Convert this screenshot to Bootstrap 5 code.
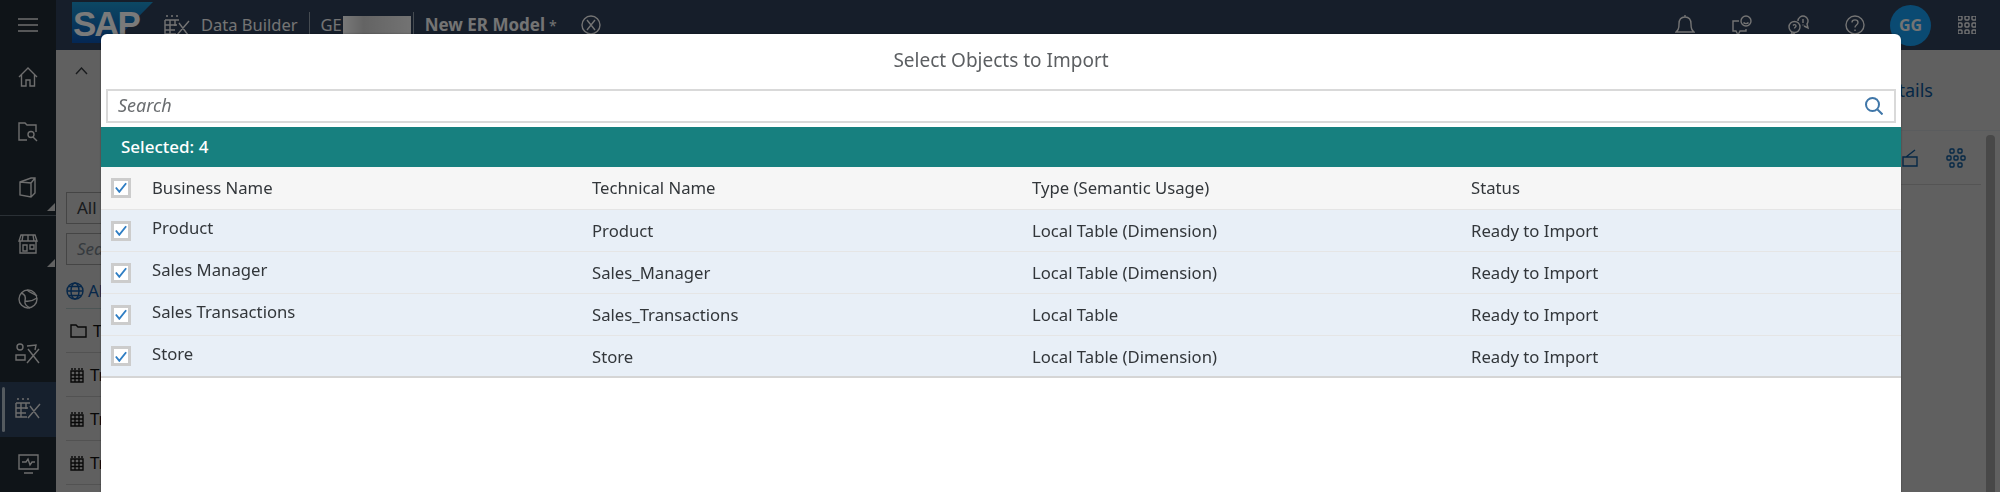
<!DOCTYPE html>
<html lang="en">
<head>
    <meta charset="UTF-8">
    <title>Data Builder - Select Objects to Import</title>
    <link rel="stylesheet" href="https://cdn.jsdelivr.net/npm/bootstrap@5.3.0/dist/css/bootstrap.min.css">
    <style>
        body { font-family: "Noto Sans", "Liberation Sans", sans-serif; height: 492px; overflow: hidden; background: #c0c0c0; color: #32363a; }
        svg { display: block; fill: none; stroke: currentColor; stroke-width: 1.4; }

        /* side rail */
        .rail { width: 56px; height: 492px; background: #1e2830; color: #dcdcdc; flex: none; }
        .rail-top { height: 50px; }
        .rail-item { height: 56px; position: relative; }
        .rail-item.has-more::after { content: ""; position: absolute; right: 1px; bottom: 4px; border: 4px solid transparent; border-right-color: #c4c4c4; border-bottom-color: #c4c4c4; }
        .rail-item.active { background: #2c405a; }
        .rail-item.active::before { content: ""; position: absolute; left: 2px; top: 5px; bottom: 5px; width: 3px; border-radius: 2px; background: #a9b4be; }
        .rail-sep { height: 1px; background: #55606a; }

        /* shell header */
        .shell { height: 50px; background: #2c3c54; color: #e8e8e8; font-size: 16.5px; padding-left: 16px; }
        .sap-logo { position: relative; width: 81px; height: 41px; margin-top: 2px; align-self: flex-start; color: #f4f4f4; font: bold 35px/43px "Liberation Sans", sans-serif; letter-spacing: -2px; padding-left: 1px; }
        .sap-logo::before { content: ""; position: absolute; inset: 0; z-index: -1; clip-path: polygon(0 0, 100% 0, 50% 100%, 0 100%); background: linear-gradient(#1a90c8, #0a4fa8); }
        .shell-icon { margin-left: 11px; margin-right: 11px; }
        .shell-sep { width: 1px; height: 27px; background: #8a96a2; margin: 0 11px; }
        .blurred { width: 68px; height: 19px; margin: 0 2px 0 1px; background: linear-gradient(90deg, #f2f2f2, #c8c8c8 30%, #e6e6e6); }
        .model-name { font-size: 17px; font-weight: 700; }
        .model-dirty { margin-left: 4px; font-size: 14px; }
        .actions { gap: 36px; padding-right: 24px; }
        .avatar { width: 41px; height: 41px; border-radius: 50%; background: #1494e4; font-size: 16px; font-weight: 700; margin: 0 -9px 0 -11px; }

        /* page under the dialog */
        .pane-left { width: 200px; padding: 17px 0 0 10px; font-size: 17px; }
        .pane-right { width: 200px; font-size: 17px; }
        .up-chevron { margin-left: 9px; height: 125px; }
        .filter-box { height: 32px; border: 1px solid #8a8a8a; width: 190px; padding-left: 10px; margin-bottom: 9px; line-height: 30px; }
        .filter-box.search-like { margin-bottom: 0; }
        .tree-head { height: 44px; color: #0f4f92; border-bottom: 1px solid #9aa; padding-top: 17px; gap: 4px; line-height: 18px; }
        .tree-row { height: 44px; border-bottom: 1px solid #a5a5a5; padding-left: 4px; gap: 6px; color: #111; }
        .details-link { height: 81px; line-height: 80px; border-bottom: 1px solid #b4b8bc; text-align: right; padding-right: 67px; color: #0a4f8c; font-size: 18px; }
        .tool-row { height: 54px; border-bottom: 1px solid #a8a8a8; width: 80px; margin-left: 101px; color: #0a4f8c; justify-content: space-between; padding: 0 15px 0 1px; }
        .scroll-thumb { position: absolute; left: 186px; top: 85px; width: 9px; height: 360px; border-radius: 4px; background: #909090; }

        /* dialog */
        .import-dialog { position: absolute; left: 101px; top: 34px; width: 1800px; height: 470px; z-index: 1055; border-radius: 6px 6px 0 0; background: #fff; border: 0; box-shadow: 0 0 2px rgba(0,0,0,.4); }
        .dialog-title { height: 55px; line-height: 52px; text-align: center; font-size: 19px; color: #5c5f62; }
        .search-box { height: 34px; margin: 0 5px 4px; border: 2px solid #d9d9d9; }
        .search-box input { border: 0; border-radius: 0; height: 30px; padding: 0 0 2px 10px; font-size: 18px; font-style: italic; box-shadow: none; background: transparent; }
        .search-box input::placeholder { color: #6a6d70; }
        .search-box svg { margin-right: 11px; color: #3f76a8; stroke-width: 2; flex: none; }
        .selected-bar { height: 40px; background: #17807f; color: #fff; font-size: 17px; font-weight: 500; line-height: 39px; padding-left: 20px; }
        .import-table { table-layout: fixed; width: 1800px; margin: 0; font-size: 16.7px; color: #32363a; border-bottom: 2px solid #d5d5d5; }
        .import-table > * > tr > * { padding: 1px 0 0; height: 42px; vertical-align: middle; border-bottom: 1px solid #e5e5e5; box-shadow: none; font-weight: 400; }
        .import-table thead th { background: #f6f6f6; color: #32363a; padding: 0; }
        .import-table tbody td { background: #e8eff7; color: #32363a; }
        .import-table tbody tr:last-child td { border-bottom: 0; }
        .import-table tbody .name-cell { padding-bottom: 5px; }
        .check-mark { width: 20px; height: 20px; margin-left: 10px; border: 3px solid #cccccc; background: #fff; color: #2f7ec4; }
        .check-mark svg { stroke-width: 2.2; }
    </style>
</head>
<body>
    <div class="d-flex">
        <!-- side rail -->
        <nav class="rail d-flex flex-column">
            <div class="rail-top d-flex align-items-center justify-content-center">
                <svg width="20" height="16" viewBox="0 0 20 16" stroke-width="2.4"><path d="M0 2h20M0 8h20M0 14h20"/></svg>
            </div>
            <div class="rail-item d-flex align-items-center justify-content-center">
                <svg width="20" height="20" viewBox="0 0 20 20"><path d="M1 10 10 1l9 9M3.500 8v11h4.500v-6h4v6h4.500V8"/></svg>
            </div>
            <div class="rail-item d-flex align-items-center justify-content-center">
                <svg width="21" height="20" viewBox="0 0 21 20"><path d="M9 18H1V1h6l2 2h9v7"/><circle cx="13" cy="12.500" r="3"/><path d="m15 15 4 4"/></svg>
            </div>
            <div class="rail-item has-more d-flex align-items-center justify-content-center">
                <svg width="18" height="21" viewBox="0 0 18 21"><path d="M1 5 12 1h4v15l-4 4-11-2zM1 5l11 1v14M12 6l4-5"/></svg>
            </div>
            <div class="rail-sep"></div>
            <div class="rail-item has-more d-flex align-items-center justify-content-center">
                <svg width="20" height="20" viewBox="0 0 20 20"><path d="M3 1h14l2 6H1zM2 7v12h16V7M5 1 4 7M10 1v6M15 1l1 6M5 11h4v6H5zM12 11h4v4h-4z"/></svg>
            </div>
            <div class="rail-item d-flex align-items-center justify-content-center">
                <svg width="20" height="20" viewBox="0 0 20 20"><circle cx="10" cy="10" r="9"/><path d="M3 4c4 1 5 4 4 8s3 6 5 7M9 1c3 3 8 4 10 6M7 12c4 1 9-1 12-3"/></svg>
            </div>
            <div class="rail-item d-flex align-items-center justify-content-center">
                <svg width="26" height="22" viewBox="0 0 26 22"><circle cx="5" cy="4" r="3"/><path d="M1 12h9v5H1zM12 3l9-1-1 5M13 6l11 14M24 6 12 20"/></svg>
            </div>
            <div class="rail-item active d-flex align-items-center justify-content-center">
                <svg width="26" height="22" viewBox="0 0 26 22" stroke-width="1.400"><path d="M2 1h2M7 1h2M12 1h2M1 5h14M1 5v14h11M1 10h12M1 15h10M6 5v14M11 5v6M15 8l9 12M25 6 13 20"/></svg>
            </div>
            <div class="rail-item d-flex align-items-center justify-content-center">
                <svg width="21" height="20" viewBox="0 0 21 20"><path d="M1 1h19v14H1zM6 19h9M4 8h4l2-3 2 6 2-3h3"/></svg>
            </div>
        </nav>

        <div class="flex-grow-1">
            <!-- shell header -->
            <header class="shell d-flex align-items-center position-relative z-1">
                <div class="sap-logo">SAP</div>
                <svg class="shell-icon" width="26" height="21" viewBox="0 0 26 21" stroke-width="1.300"><path d="M2 1h2M7 1h2M12 1h2M1 5h14M1 5v14h11M1 10h12M1 15h10M6 5v14M11 5v6M15 8l9 12M25 6 13 20"/></svg>
                <span>Data Builder</span>
                <div class="shell-sep"></div>
                <span>GE</span>
                <div class="blurred"></div>
                <div class="shell-sep ms-0"></div>
                <span class="model-name">New ER Model</span><span class="model-dirty">*</span>
                <svg class="ms-4" width="20" height="20" viewBox="0 0 20 20"><circle cx="10" cy="10" r="9"/><path d="m6 5 8 10M14 5 6 15"/></svg>
                <div class="actions d-flex align-items-center ms-auto">
                    <svg width="20" height="21" viewBox="0 0 20 21"><path d="M1 17c2-2 3-3 3-8s3-7 6-7 6 2 6 7 1 6 3 8zM8 20h4M10 0v2"/></svg>
                    <svg width="21" height="21" viewBox="0 0 21 21"><path d="M8 6H2v10h3l2 4 2-4h6v-2"/><circle cx="15" cy="6" r="5"/><path d="M13 5h.01M17 5h.01M12.500 7.500c1 1.500 4 1.500 5 0"/></svg>
                    <svg width="21" height="21" viewBox="0 0 21 21"><circle cx="6.500" cy="12" r="5.500"/><path d="m4 17-1 3 4-2M10 6a5 5 0 1 1 9 3l1 4-4-2M15 4v4M15 9.500v1M5 10.500c1-1.500 3-1 3 .5s-1.500 1-1.500 2.500"/></svg>
                    <svg width="20" height="20" viewBox="0 0 20 20"><circle cx="10" cy="10" r="9"/><path d="M7 7.500C7 4 13 4 13 7.500c0 2.500-3 2.500-3 5M10 14.500v1.500"/></svg>
                    <div class="avatar d-flex align-items-center justify-content-center">GG</div>
                    <svg width="18" height="18" viewBox="0 0 18 18" fill="currentColor" stroke="none"><rect width="4" height="4" rx="1"/><rect x="7" width="4" height="4" rx="1"/><rect x="14" width="4" height="4" rx="1"/><rect y="7" width="4" height="4" rx="1"/><rect x="7" y="7" width="4" height="4" rx="1"/><rect x="14" y="7" width="4" height="4" rx="1"/><rect y="14" width="4" height="4" rx="1"/><rect x="7" y="14" width="4" height="4" rx="1"/><rect x="14" y="14" width="4" height="4" rx="1"/></svg>
                </div>
            </header>

            <!-- page under the dialog -->
            <main class="d-flex justify-content-between">
                <div class="pane-left">
                    <div class="up-chevron"><svg width="13" height="8" viewBox="0 0 13 8" stroke-width="2"><path d="m1 7 5.500-6L12 7"/></svg></div>
                    <div class="filter-box">All</div>
                    <div class="filter-box search-like fst-italic text-secondary">Search</div>
                    <div class="tree-head d-flex">
                        <svg width="18" height="18" viewBox="0 0 18 18" stroke-width="1.300"><circle cx="9" cy="9" r="8"/><ellipse cx="9" cy="9" rx="4" ry="8"/><path d="M1 9h16M2.500 4.500h13M2.500 13.500h13"/></svg>
                        <span>All</span>
                    </div>
                    <div class="tree-row d-flex align-items-center">
                        <svg width="17" height="14" viewBox="0 0 17 14" stroke-width="1.200"><path d="M1 1h5l2 2h8v10H1z"/></svg><span>T</span>
                    </div>
                    <div class="tree-row d-flex align-items-center">
                        <svg width="14" height="16" viewBox="0 0 14 16" stroke-width="1.200"><path d="M1 4h12v11H1zM1 8h12M1 11.500h12M5 4v11M9 4v11M2 1v2M5 1v2M9 1v2M12 1v2"/></svg><span>Tr</span>
                    </div>
                    <div class="tree-row d-flex align-items-center">
                        <svg width="14" height="16" viewBox="0 0 14 16" stroke-width="1.200"><path d="M1 4h12v11H1zM1 8h12M1 11.500h12M5 4v11M9 4v11M2 1v2M5 1v2M9 1v2M12 1v2"/></svg><span>Tr</span>
                    </div>
                    <div class="tree-row d-flex align-items-center">
                        <svg width="14" height="16" viewBox="0 0 14 16" stroke-width="1.200"><path d="M1 4h12v11H1zM1 8h12M1 11.500h12M5 4v11M9 4v11M2 1v2M5 1v2M9 1v2M12 1v2"/></svg><span>Tr</span>
                    </div>
                </div>
                <div class="pane-right position-relative">
                    <div class="details-link">Details</div>
                    <div class="tool-row d-flex align-items-center">
                        <svg width="16" height="18" viewBox="0 0 16 18" stroke-width="1.300"><path d="M1 8h14v9H1zM4 8l9-7"/></svg>
                        <svg width="20" height="20" viewBox="0 0 20 20" stroke-width="1.300"><rect x="4" y="1" width="4" height="4" rx="1"/><rect x="12" y="1" width="4" height="4" rx="1"/><rect x="1" y="8" width="4" height="4" rx="1"/><rect x="8" y="8" width="4" height="4" rx="1"/><rect x="15" y="8" width="4" height="4" rx="1"/><rect x="4" y="15" width="4" height="4" rx="1"/><rect x="12" y="15" width="4" height="4" rx="1"/></svg>
                    </div>
                    <div class="scroll-thumb"></div>
                </div>
            </main>
        </div>
    </div>

    <div class="modal-backdrop show"></div>

    <!-- import dialog -->
    <div class="modal-content import-dialog">
        <div class="dialog-title">Select Objects to Import</div>
        <div class="search-box d-flex align-items-center">
            <input class="form-control" type="text" placeholder="Search">
            <svg width="18" height="18" viewBox="0 0 18 18"><circle cx="7.500" cy="7.500" r="6.500"/><path d="m12.500 12.500 5 5"/></svg>
        </div>
        <div class="selected-bar">Selected: 4</div>
        <table class="table import-table">
            <colgroup><col style="width:51px"><col style="width:440px"><col style="width:440px"><col style="width:439px"><col></colgroup>
            <thead>
                <tr>
                    <th><div class="check-mark d-flex align-items-center justify-content-center"><svg width="12" height="11" viewBox="0 0 14 12"><path d="m1 6 4 5 8-10"/></svg></div></th>
                    <th>Business Name</th><th>Technical Name</th><th>Type (Semantic Usage)</th><th>Status</th>
                </tr>
            </thead>
            <tbody id="rows"></tbody>
        </table>
    </div>

    <script>
        const objects = [
            ['Product', 'Product', 'Local Table (Dimension)'],
            ['Sales Manager', 'Sales_Manager', 'Local Table (Dimension)'],
            ['Sales Transactions', 'Sales_Transactions', 'Local Table'],
            ['Store', 'Store', 'Local Table (Dimension)']
        ];
        document.getElementById('rows').innerHTML = objects.map(o => `
            <tr>
                <td><div class="check-mark d-flex align-items-center justify-content-center"><svg width="12" height="11" viewBox="0 0 14 12"><path d="m1 6 4 5 8-10"/></svg></div></td>
                <td class="name-cell">${o[0]}</td><td>${o[1]}</td><td>${o[2]}</td><td>Ready to Import</td>
            </tr>`).join('');
    </script>
    <script src="https://cdn.jsdelivr.net/npm/bootstrap@5.3.0/dist/js/bootstrap.bundle.min.js"></script>
</body>
</html>
